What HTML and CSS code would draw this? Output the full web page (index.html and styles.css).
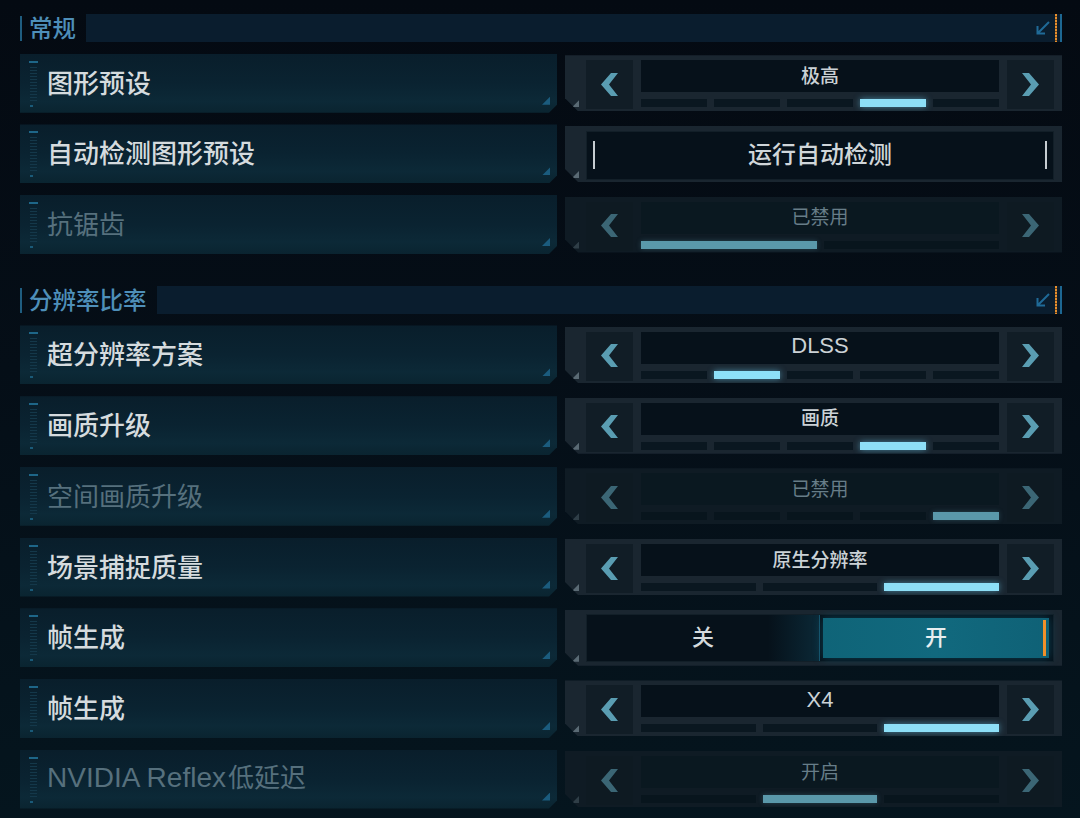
FILE: index.html
```html
<!DOCTYPE html>
<html lang="zh-CN">
<head>
<meta charset="utf-8">
<title>设置</title>
<link rel="stylesheet" href="styles.css">
</head>
<body>
<div class="page">
  <section class="group">
    <div class="ghead">
      <span class="gtitle">常规</span>
      <div class="gbar">
        <svg class="gicon" viewBox="0 0 16 16"><path d="M14 2 L3 13 M2.5 6 V13.5 H10"/></svg>
        <i class="gdash"></i>
      </div>
    </div>

    <div class="row">
      <div class="label"><span class="ruler"></span><span class="ltext">图形预设</span></div>
      <div class="ctrl">
        <div class="arrow"><svg viewBox="0 0 17 23"><path d="M10 0 H17 L8 11.5 L17 23 H10 L0 11.5 Z"/></svg></div>
        <div class="mid"><div class="val">极高</div><div class="segs"><i></i><i></i><i></i><i class="on"></i><i></i></div></div>
        <div class="arrow"><svg viewBox="0 0 17 23"><path d="M7 0 H0 L9 11.5 L0 23 H7 L17 11.5 Z"/></svg></div>
      </div>
    </div>

    <div class="row">
      <div class="label"><span class="ruler"></span><span class="ltext">自动检测图形预设</span></div>
      <div class="ctrl">
        <div class="btn"><i class="mark"></i><span class="btext">运行自动检测</span><i class="mark"></i></div>
      </div>
    </div>

    <div class="row disabled">
      <div class="label"><span class="ruler"></span><span class="ltext">抗锯齿</span></div>
      <div class="ctrl">
        <div class="arrow"><svg viewBox="0 0 17 23"><path d="M10 0 H17 L8 11.5 L17 23 H10 L0 11.5 Z"/></svg></div>
        <div class="mid"><div class="val">已禁用</div><div class="segs"><i class="on"></i><i></i></div></div>
        <div class="arrow"><svg viewBox="0 0 17 23"><path d="M7 0 H0 L9 11.5 L0 23 H7 L17 11.5 Z"/></svg></div>
      </div>
    </div>
  </section>

  <section class="group group2">
    <div class="ghead">
      <span class="gtitle">分辨率比率</span>
      <div class="gbar">
        <svg class="gicon" viewBox="0 0 16 16"><path d="M14 2 L3 13 M2.5 6 V13.5 H10"/></svg>
        <i class="gdash"></i>
      </div>
    </div>

    <div class="row">
      <div class="label"><span class="ruler"></span><span class="ltext">超分辨率方案</span></div>
      <div class="ctrl">
        <div class="arrow"><svg viewBox="0 0 17 23"><path d="M10 0 H17 L8 11.5 L17 23 H10 L0 11.5 Z"/></svg></div>
        <div class="mid"><div class="val latin">DLSS</div><div class="segs"><i></i><i class="on"></i><i></i><i></i><i></i></div></div>
        <div class="arrow"><svg viewBox="0 0 17 23"><path d="M7 0 H0 L9 11.5 L0 23 H7 L17 11.5 Z"/></svg></div>
      </div>
    </div>

    <div class="row">
      <div class="label"><span class="ruler"></span><span class="ltext">画质升级</span></div>
      <div class="ctrl">
        <div class="arrow"><svg viewBox="0 0 17 23"><path d="M10 0 H17 L8 11.5 L17 23 H10 L0 11.5 Z"/></svg></div>
        <div class="mid"><div class="val">画质</div><div class="segs"><i></i><i></i><i></i><i class="on"></i><i></i></div></div>
        <div class="arrow"><svg viewBox="0 0 17 23"><path d="M7 0 H0 L9 11.5 L0 23 H7 L17 11.5 Z"/></svg></div>
      </div>
    </div>

    <div class="row disabled">
      <div class="label"><span class="ruler"></span><span class="ltext">空间画质升级</span></div>
      <div class="ctrl">
        <div class="arrow"><svg viewBox="0 0 17 23"><path d="M10 0 H17 L8 11.5 L17 23 H10 L0 11.5 Z"/></svg></div>
        <div class="mid"><div class="val">已禁用</div><div class="segs"><i></i><i></i><i></i><i></i><i class="on"></i></div></div>
        <div class="arrow"><svg viewBox="0 0 17 23"><path d="M7 0 H0 L9 11.5 L0 23 H7 L17 11.5 Z"/></svg></div>
      </div>
    </div>

    <div class="row">
      <div class="label"><span class="ruler"></span><span class="ltext">场景捕捉质量</span></div>
      <div class="ctrl">
        <div class="arrow"><svg viewBox="0 0 17 23"><path d="M10 0 H17 L8 11.5 L17 23 H10 L0 11.5 Z"/></svg></div>
        <div class="mid"><div class="val">原生分辨率</div><div class="segs"><i></i><i></i><i class="on"></i></div></div>
        <div class="arrow"><svg viewBox="0 0 17 23"><path d="M7 0 H0 L9 11.5 L0 23 H7 L17 11.5 Z"/></svg></div>
      </div>
    </div>

    <div class="row">
      <div class="label"><span class="ruler"></span><span class="ltext">帧生成</span></div>
      <div class="ctrl tg">
        <div class="toggle">
          <div class="opt off">关</div>
          <i class="divider"></i>
          <div class="opt onopt">开<i class="obar"></i></div>
        </div>
      </div>
    </div>

    <div class="row">
      <div class="label"><span class="ruler"></span><span class="ltext">帧生成</span></div>
      <div class="ctrl">
        <div class="arrow"><svg viewBox="0 0 17 23"><path d="M10 0 H17 L8 11.5 L17 23 H10 L0 11.5 Z"/></svg></div>
        <div class="mid"><div class="val latin">X4</div><div class="segs"><i></i><i></i><i class="on"></i></div></div>
        <div class="arrow"><svg viewBox="0 0 17 23"><path d="M7 0 H0 L9 11.5 L0 23 H7 L17 11.5 Z"/></svg></div>
      </div>
    </div>

    <div class="row disabled">
      <div class="label"><span class="ruler"></span><span class="ltext"><span class="lat">NVIDIA Reflex</span>低延迟</span></div>
      <div class="ctrl">
        <div class="arrow"><svg viewBox="0 0 17 23"><path d="M10 0 H17 L8 11.5 L17 23 H10 L0 11.5 Z"/></svg></div>
        <div class="mid"><div class="val">开启</div><div class="segs"><i></i><i class="on"></i><i></i></div></div>
        <div class="arrow"><svg viewBox="0 0 17 23"><path d="M7 0 H0 L9 11.5 L0 23 H7 L17 11.5 Z"/></svg></div>
      </div>
    </div>
  </section>
</div>
</body>
</html>
```
FILE: styles.css
```css
* { box-sizing: border-box; }
html, body {
  margin: 0;
  padding: 0;
  width: 1080px;
  height: 818px;
  overflow: hidden;
}
body {
  background: linear-gradient(180deg, #040a12 0%, #050e17 45%, #05151e 100%);
  font-family: "Noto Sans CJK SC", "Noto Sans", sans-serif;
  color: #d4dadd;
}
.page {
  padding: 14px 18px 0 20px;
  display: flex;
  flex-direction: column;
  gap: 11.7px;
}
.group {
  display: flex;
  flex-direction: column;
  gap: 11.7px;
}
.group2 { margin-top: 20px; }

/* section header */
.ghead {
  height: 28px;
  display: flex;
  align-items: stretch;
}
.gtitle {
  display: flex;
  align-items: center;
  border-left: 2px solid #1f5d80;
  margin: 2px 0 1px;
  padding: 0 10px 1px 7px;
  font-size: 23.5px;
  font-weight: 500;
  color: #4e8fb9;
  line-height: 1;
}
.gbar {
  flex: 1;
  background: #0a1d2e;
  display: flex;
  justify-content: flex-end;
  align-items: center;
  gap: 4px;
  padding-right: 3px;
  border-right: 2px solid #1d6792;
}
.gicon {
  width: 16px;
  height: 16px;
  fill: none;
  stroke: #1f6a97;
  stroke-width: 2;
}
.gdash {
  align-self: stretch;
  width: 2px;
  background: repeating-linear-gradient(180deg, #e8902e 0 2px, #7a4a1a 2px 3px);
}

/* rows */
.row {
  height: 59px;
  display: grid;
  grid-template-columns: 537px 497px;
  column-gap: 8px;
  align-items: center;
}
.label {
  position: relative;
  height: 59px;
  display: flex;
  align-items: center;
  padding-left: 9px;
  background: linear-gradient(180deg, #091e2b 0%, #0a2331 50%, #0c2937 80%, #0a2430 100%);
  clip-path: polygon(0 0, 100% 0, 100% calc(100% - 8px), calc(100% - 8px) 100%, 0 100%);
}
.label::after {
  content: "";
  position: absolute;
  right: 7px;
  bottom: 8px;
  width: 8px;
  height: 8px;
  background: #1b5c7e;
  clip-path: polygon(100% 0, 100% 100%, 0 100%);
}
.ruler {
  align-self: flex-start;
  margin-top: 7px;
  width: 9px;
  height: 46px;
  flex: none;
  background:
    linear-gradient(#1e6688, #1e6688) 0 0 / 9px 2px no-repeat,
    linear-gradient(#1a5a78, #1a5a78) 1px 44px / 3px 2px no-repeat,
    repeating-linear-gradient(180deg, #14384a 0 1px, transparent 1px 3px) 1px 6px / 7px 34px no-repeat;
}
.ltext {
  margin-left: 9px;
  font-size: 26px;
  font-weight: 500;
  color: #d5dbde;
  line-height: 1;
  white-space: nowrap;
  padding-bottom: 3px;
}
.ltext .lat {
  font-family: "Liberation Sans", "Noto Sans CJK SC", sans-serif;
  font-size: 28px;
  font-weight: 400;
  margin-right: 2px;
}
.disabled .ltext {
  color: #56707d;
  font-weight: 400;
}

/* control frame */
.ctrl {
  position: relative;
  height: 56px;
  display: flex;
  gap: 8px;
  padding: 5px 8px 2px 21px;
  background: #1a2630;
  clip-path: polygon(0 0, 100% 0, 100% 100%, 13px 100%, 0 calc(100% - 13px));
}
.ctrl.tg { padding: 4px 8px 4px 21px; }
.ctrl::before {
  content: "";
  position: absolute;
  left: 7px;
  bottom: 4px;
  width: 7px;
  height: 7px;
  background: #5a6a74;
  clip-path: polygon(100% 0, 100% 100%, 0 100%);
}
.arrow {
  width: 47px;
  flex: none;
  background: #111d26;
  display: flex;
  align-items: center;
  justify-content: center;
  padding-bottom: 1px;
}
.arrow svg {
  width: 17px;
  height: 23px;
  fill: #5a9db2;
}
.mid {
  flex: 1;
  display: flex;
  flex-direction: column;
}
.val {
  height: 32px;
  background: #06111a;
  display: flex;
  justify-content: center;
  align-items: center;
  font-size: 19px;
  font-weight: 500;
  color: #cbd2d6;
  padding-bottom: 4px;
  line-height: 1;
}
.val.latin {
  font-family: "Liberation Sans", "Noto Sans CJK SC", sans-serif;
  font-size: 22px;
  font-weight: 400;
  padding-bottom: 3px;
}
.segs {
  margin-top: 7px;
  height: 8px;
  display: flex;
  gap: 7px;
}
.segs i {
  flex: 1;
  background: #0a1720;
}
.segs i.on {
  background: #8ddff7;
  box-shadow: 0 0 6px rgba(110, 210, 245, 0.55);
}

/* disabled controls */
.disabled .ctrl { background: #0f1b24; }
.disabled .ctrl::before { background: #2f3e47; }
.disabled .arrow { background: #0e1a22; }
.disabled .arrow svg { fill: #3b6675; }
.disabled .val { background: #0a1820; color: #677d88; font-weight: 400; }
.disabled .segs i { background: #08151d; }
.disabled .segs i.on { background: #5a98aa; box-shadow: 0 0 5px rgba(90, 150, 170, 0.35); }

/* button */
.btn {
  flex: 1;
  background: #06111a;
  border: 1px solid #121f28;
  display: flex;
  align-items: center;
  justify-content: space-between;
  padding: 0 6px;
}
.mark {
  width: 2px;
  height: 28px;
  background: #c6cdd1;
}
.btext {
  font-size: 24px;
  font-weight: 500;
  color: #d0d6d9;
  line-height: 1;
  padding-bottom: 5px;
}

/* toggle */
.toggle {
  flex: 1;
  background: #06111a;
  border: 1px solid #121f28;
  display: flex;
  align-items: stretch;
}
.opt {
  display: flex;
  align-items: center;
  justify-content: center;
  font-size: 22px;
  font-weight: 500;
  color: #d4dadd;
  line-height: 1;
  padding-bottom: 5px;
}
.opt.off {
  width: 232px;
  background: linear-gradient(90deg, #06111a 0%, #06111a 78%, #0b2836 100%);
}
.divider {
  width: 1px;
  background: #16526a;
}
.opt.onopt {
  position: relative;
  flex: 1;
  margin: 3px 4px 3px 3px;
  background: linear-gradient(90deg, #0f6478 0%, #11697e 50%, #0f6176 100%);
  box-shadow: 0 0 10px rgba(20, 120, 150, 0.45);
  color: #e8eef0;
}
.obar {
  position: absolute;
  right: 3px;
  top: 2px;
  bottom: 2px;
  width: 3px;
  background: #f0902a;
}
```
